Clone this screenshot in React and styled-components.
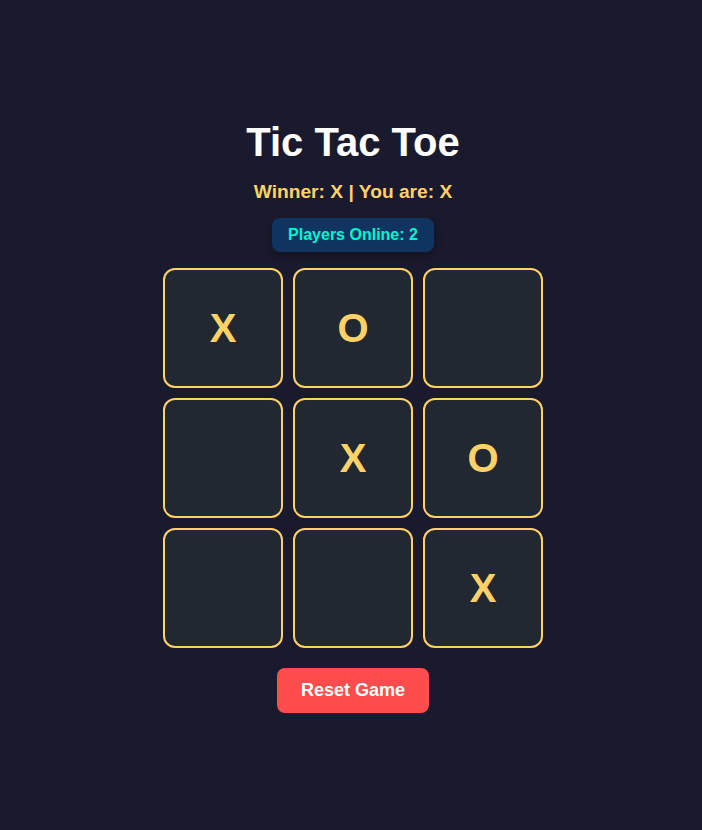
import React from "react";
import styled, { createGlobalStyle } from "styled-components";

const Global = createGlobalStyle`
  html, body { margin: 0; padding: 0; background: #1a1a2e; }
  body { font-family: "Liberation Sans", Arial, sans-serif; }
`;

const Page = styled.div`
  min-height: 830px;
  box-sizing: border-box;
  padding: 119px 0 0 4px;
  display: flex;
  flex-direction: column;
  align-items: center;
  color: #fff;
`;

const Title = styled.h1`
  margin: 0;
  font-size: 40px;
  font-weight: 700;
  line-height: 46px;
  color: #ffffff;
`;

const Status = styled.div`
  margin-top: 16px;
  font-size: 19.2px;
  font-weight: 700;
  line-height: 22px;
  color: #ffd166;
`;

const Badge = styled.div`
  margin-top: 15px;
  padding: 8px 16px;
  height: 34px;
  box-sizing: border-box;
  display: flex;
  align-items: center;
  background: #0f3460;
  color: #00f5d4;
  font-size: 16px;
  font-weight: 700;
  border-radius: 8px;
  box-shadow: 0 4px 10px rgba(0, 0, 0, 0.3);
`;

const Board = styled.div`
  margin-top: 16px;
  display: grid;
  grid-template-columns: repeat(3, 120px);
  grid-auto-rows: 120px;
  gap: 10px;
`;

const Cell = styled.button`
  box-sizing: border-box;
  width: 120px;
  height: 120px;
  padding: 0;
  background: #222831;
  border: 2px solid #ffd166;
  border-radius: 12px;
  color: #ffd166;
  font-family: "Liberation Sans", Arial, sans-serif;
  font-size: 40px;
  font-weight: 700;
  display: flex;
  align-items: center;
  justify-content: center;
  cursor: pointer;
`;

const Reset = styled.button`
  margin-top: 20px;
  width: 152px;
  height: 45px;
  border: none;
  border-radius: 8px;
  background: #ff4d4d;
  color: #ffffff;
  font-family: "Liberation Sans", Arial, sans-serif;
  font-size: 18px;
  font-weight: 700;
  cursor: pointer;
`;

const board = ["X", "O", "", "", "X", "O", "", "", "X"];

export default function App() {
  return (
    <>
      <Global />
      <Page>
        <Title>Tic Tac Toe</Title>
        <Status>Winner: X | You are: X</Status>
        <Badge>Players Online: 2</Badge>
        <Board>
          {board.map((v, i) => (
            <Cell key={i}>{v}</Cell>
          ))}
        </Board>
        <Reset>Reset Game</Reset>
      </Page>
    </>
  );
}
